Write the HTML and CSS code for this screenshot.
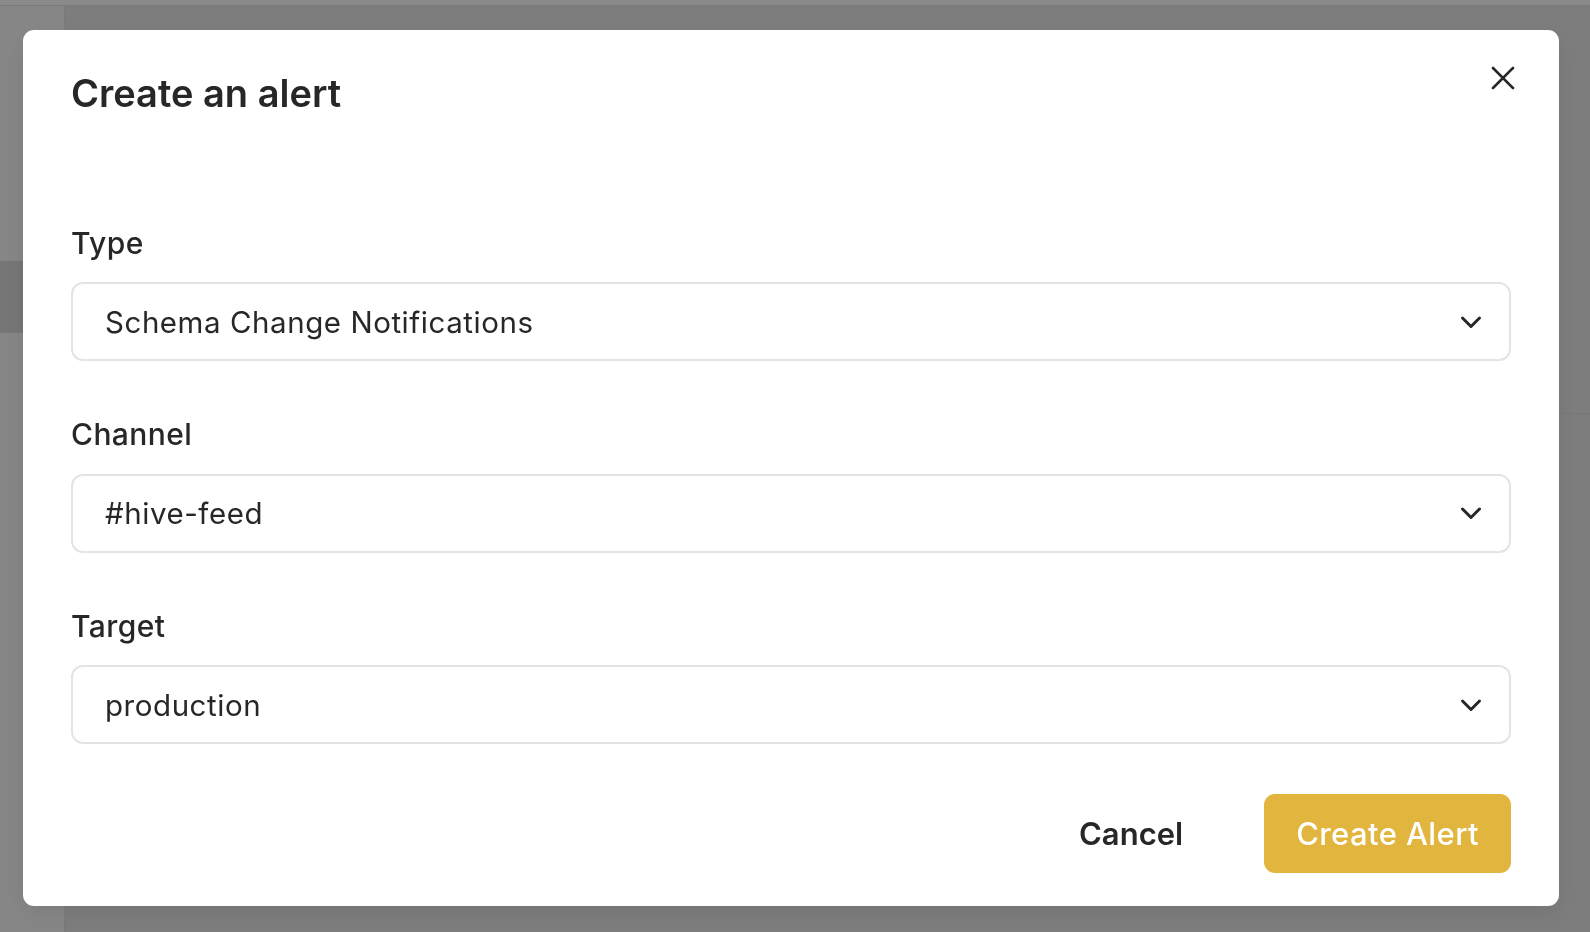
FILE: index.html
```html
<!DOCTYPE html>
<html lang="en">
<head>
<meta charset="utf-8">
<title>Create an alert</title>
<link rel="stylesheet" href="styles.css">
</head>
<body>
<div class="page">
  <div class="topbar"></div>
  <div class="page-body">
    <aside class="sidebar">
      <div class="nav-item"></div>
      <div class="nav-item active"></div>
    </aside>
    <main class="main">
      <div class="panel"></div>
    </main>
  </div>
</div>

<div class="overlay">
  <div class="modal" role="dialog" aria-labelledby="modal-title">
    <button class="close-btn" aria-label="Close">
      <svg viewBox="0 0 24 24" width="24" height="24"><path d="M2 2L22 22M22 2L2 22" fill="none" stroke="#27272a" stroke-width="2.6" stroke-linecap="round"/></svg>
    </button>
    <h2 class="modal-title" id="modal-title">Create an alert</h2>
    <div class="fields">
      <div class="field">
        <label class="field-label">Type</label>
        <div class="select">
          <span class="select-value">Schema Change Notifications</span>
          <svg class="chevron" viewBox="0 0 24 14" width="24" height="14"><path d="M3.5 3L12 11.5L20.5 3" fill="none" stroke="#27272a" stroke-width="3" stroke-linecap="round" stroke-linejoin="round"/></svg>
        </div>
      </div>
      <div class="field">
        <label class="field-label">Channel</label>
        <div class="select">
          <span class="select-value">#hive-feed</span>
          <svg class="chevron" viewBox="0 0 24 14" width="24" height="14"><path d="M3.5 3L12 11.5L20.5 3" fill="none" stroke="#27272a" stroke-width="3" stroke-linecap="round" stroke-linejoin="round"/></svg>
        </div>
      </div>
      <div class="field">
        <label class="field-label">Target</label>
        <div class="select">
          <span class="select-value">production</span>
          <svg class="chevron" viewBox="0 0 24 14" width="24" height="14"><path d="M3.5 3L12 11.5L20.5 3" fill="none" stroke="#27272a" stroke-width="3" stroke-linecap="round" stroke-linejoin="round"/></svg>
        </div>
      </div>
    </div>
    <div class="actions">
      <button class="btn btn-cancel">Cancel</button>
      <button class="btn btn-primary">Create Alert</button>
    </div>
  </div>
</div>
</body>
</html>
```
FILE: styles.css
```css
* { box-sizing: border-box; }

html, body {
  margin: 0;
  padding: 0;
  height: 100%;
}

body {
  font-family: Inter, "Noto Sans", "Liberation Sans", sans-serif;
  color: #27272a;
  background: #e7e7e7;
  overflow: hidden;
}

/* underlying page, dimmed by overlay */
.page {
  height: 100%;
  display: flex;
  flex-direction: column;
}

.topbar {
  height: 6px;
  background: #ffffff;
  border-bottom: 1px solid #e0e0e0;
}

.page-body {
  flex: 1;
  display: flex;
}

.sidebar {
  width: 65px;
  background: #f8f8f8;
  border-right: 1px solid #e2e2e2;
  padding-top: 255px;
  display: flex;
  flex-direction: column;
}

.nav-item.active {
  height: 72px;
  background: #dadada;
}

.main {
  flex: 1;
  background: #e7e7e7;
  padding-top: 407px;
}

.panel {
  border-top: 1px solid #dddddd;
}

/* overlay */
.overlay {
  position: fixed;
  inset: 0;
  background: rgba(0, 0, 0, 0.46);
  padding: 30px 0 0 23px;
}

.modal {
  position: relative;
  width: 1536px;
  background: #ffffff;
  border-radius: 11px;
  padding: 40.5px 48px 33px 48px;
  box-shadow: 0 8px 24px rgba(0, 0, 0, 0.08);
}

.close-btn {
  position: absolute;
  top: 35.5px;
  right: 44px;
  width: 24px;
  height: 24px;
  padding: 0;
  border: 0;
  background: none;
  display: flex;
}

.modal-title {
  margin: 0;
  font-size: 38px;
  line-height: 45px;
  font-weight: 600;
}

.fields {
  margin-top: 107px;
  display: flex;
  flex-direction: column;
  gap: 53px;
}

.field {
  display: flex;
  flex-direction: column;
}

.field-label {
  font-size: 30px;
  line-height: 40px;
  font-weight: 500;
  letter-spacing: 0.4px;
  margin-bottom: 19.5px;
}

.select {
  height: 79px;
  border: 2px solid #e4e4e7;
  border-radius: 12px;
  display: flex;
  align-items: center;
  justify-content: space-between;
  padding: 0 26px 0 32px;
}

.select-value {
  font-size: 29.5px;
  font-weight: 400;
  letter-spacing: 0.55px;
}

.chevron {
  display: block;
}

.actions {
  margin-top: 49.5px;
  display: flex;
  justify-content: flex-end;
  gap: 49px;
}

.btn {
  font-family: inherit;
  font-size: 31px;
  height: 79px;
  padding: 0 32px;
  border: 0;
  border-radius: 11px;
  background: none;
  color: #27272a;
}

.btn-cancel {
  font-weight: 600;
}

.btn-primary {
  background: #e2b53e;
  color: #ffffff;
  font-weight: 500;
  letter-spacing: 0.4px;
}
```
